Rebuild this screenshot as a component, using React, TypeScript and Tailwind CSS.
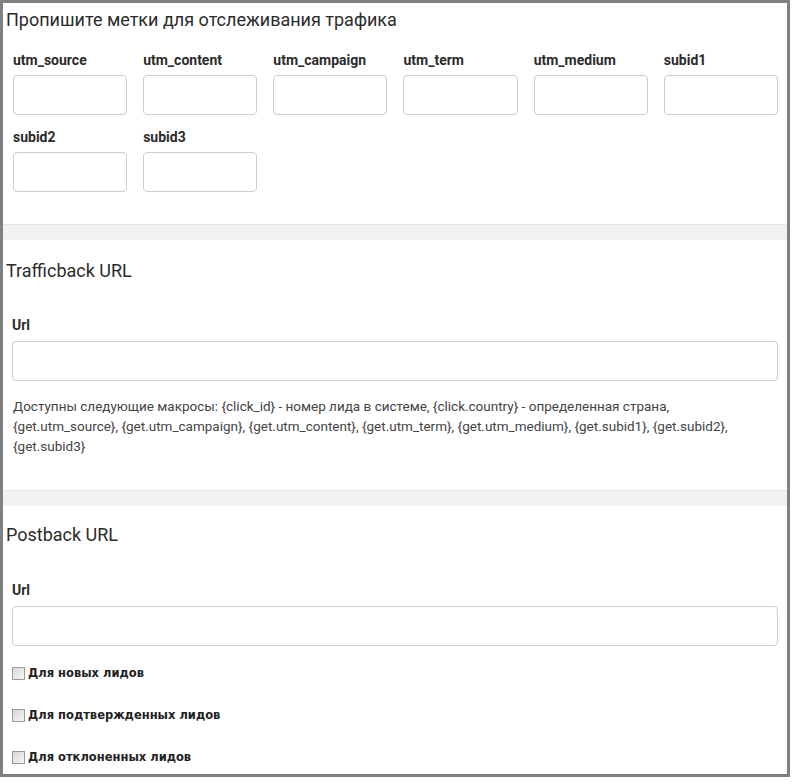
import React from "react";

const tags = [
  "utm_source",
  "utm_content",
  "utm_campaign",
  "utm_term",
  "utm_medium",
  "subid1",
  "subid2",
  "subid3",
];

const leads = ["Для новых лидов", "Для подтвержденных лидов", "Для отклоненных лидов"];

function Band() {
  return <div className="h-[16px] bg-[#f2f2f2] border-t border-[#e6e6e6]" />;
}

function Checkbox() {
  return (
    <span className="inline-block w-[13px] h-[13px] border border-[#9a9a9a] bg-gradient-to-br from-[#d9d9d9] to-[#f4f4f4] shrink-0" />
  );
}

export default function App() {
  return (
    <div className="w-[794px] h-[784px] bg-white font-['Roboto',sans-serif]">
      <div className="w-[790px] h-[777px] border-[3px] border-[#808080] overflow-hidden text-[#333]">
        {/* метки */}
        <section className="pt-[5px] pb-[32px]">
          <h2 className="px-[3px] text-[18px] leading-[24px] text-[#2b2b2b]">
            Пропишите метки для отслеживания трафика
          </h2>
          <div className="grid grid-cols-6 gap-x-4 gap-y-[14px] pl-[10px] pr-[9px] mt-[20px]">
            {tags.map((t) => (
              <div key={t}>
                <div className="text-[14px] font-bold leading-[16px] mb-[7px] text-[#2b2b2b]">{t}</div>
                <input className="block w-full h-[40px] border border-[#cccccc] rounded-[4px] bg-white outline-none" />
              </div>
            ))}
          </div>
        </section>

        <Band />

        {/* trafficback */}
        <section className="pt-[19px] pb-[34px]">
          <h2 className="px-[3px] text-[18px] leading-[24px] text-[#2b2b2b]">Trafficback URL</h2>
          <div className="px-[9px] mt-[34px]">
            <div className="text-[14px] font-bold leading-[16px] mb-[8px] text-[#2b2b2b]">Url</div>
            <input className="block w-full h-[40px] border border-[#cccccc] rounded-[4px] bg-white outline-none" />
            <p className="mt-[15px] pl-[1px] text-[13.5px] leading-[20px] text-[#444]">
              Доступны следующие макросы: {"{click_id}"} - номер лида в системе, {"{click.country}"} - определенная страна,
              <br />
              {"{get.utm_source}"}, {"{get.utm_campaign}"}, {"{get.utm_content}"}, {"{get.utm_term}"},
              {" {get.utm_medium}"}, {"{get.subid1}"}, {"{get.subid2}"},
              <br />
              {"{get.subid3}"}
            </p>
          </div>
        </section>

        <Band />

        {/* postback */}
        <section className="pt-[17px]">
          <h2 className="px-[3px] text-[18px] leading-[24px] text-[#2b2b2b]">Postback URL</h2>
          <div className="px-[9px] mt-[35px]">
            <div className="text-[14px] font-bold leading-[16px] mb-[8px] text-[#2b2b2b]">Url</div>
            <input className="block w-full h-[40px] border border-[#cccccc] rounded-[4px] bg-white outline-none" />
            <div className="flex flex-col gap-[27px] mt-[20px]">
              {leads.map((l) => (
                <label key={l} className="flex items-center gap-[3px] h-[15px]">
                  <Checkbox />
                  <span className="font-['DejaVu_Sans',sans-serif] font-bold text-[11.5px] leading-[15px] text-[#222]">
                    {l}
                  </span>
                </label>
              ))}
            </div>
          </div>
        </section>
      </div>
    </div>
  );
}
